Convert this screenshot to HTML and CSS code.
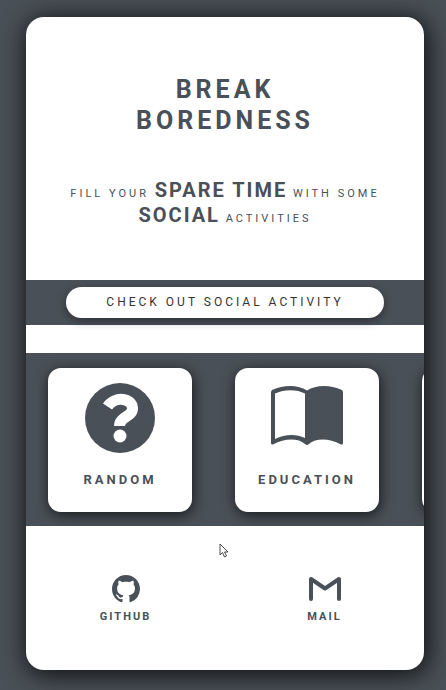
FILE: index.html
```html
<!DOCTYPE html>
<html lang="en">
<head>
<meta charset="utf-8">
<meta name="viewport" content="width=device-width, initial-scale=1">
<title>Break Boredness</title>
<link rel="stylesheet" href="styles.css">
</head>
<body>
<main class="panel">
  <header class="intro">
    <h1 class="title">Break<br>Boredness</h1>
    <p class="tagline">Fill your <strong>spare time</strong> with some <strong>social</strong> activities</p>
  </header>
  <div class="action-bar">
    <button class="action" type="button">Check out social activity</button>
  </div>
  <nav class="categories">
    <button class="category" type="button">
      <svg class="category-icon" viewBox="0 0 72 72" aria-hidden="true">
        <circle cx="36" cy="36" r="35" fill="currentColor"/>
        <path d="M23.500 24.500C31 13.500 48.500 16 48.500 26.500C48.500 35 35.500 34.500 35.500 44" fill="none" stroke="#fff" stroke-width="11"/>
        <circle cx="36" cy="54" r="6.500" fill="#fff"/>
      </svg>
      <span class="category-name">Random</span>
    </button>
    <button class="category" type="button">
      <svg class="category-icon" viewBox="0 0 72 72" aria-hidden="true">
        <path fill="currentColor" fill-rule="evenodd" d="M0 10.500Q0 9 1 8C13 2.500 27 2.500 36 8.500C45 2.500 59 2.500 71 8Q72 9 72 10.500V61Q72 63 70 62.500C58 56 45 56 38 62Q36 64 34 62C27 56 14 56 2 62.500Q0 63 0 61ZM4 11.500V57C14 52 25 51.500 34 56V11.500C26 7 13 7 4 11.500Z"/>
      </svg>
      <span class="category-name">Education</span>
    </button>
    <button class="category" type="button" aria-label="More"></button>
  </nav>
  <footer class="links">
    <a class="link" href="#github">
      <svg class="link-icon" viewBox="0 0 16 16" aria-hidden="true">
        <path fill="currentColor" d="M8 0C3.580 0 0 3.580 0 8c0 3.540 2.290 6.530 5.470 7.590.4.070.55-.17.55-.38 0-.19-.01-.82-.01-1.490-2.010.37-2.530-.49-2.690-.94-.09-.23-.48-.94-.82-1.130-.28-.15-.68-.52-.01-.53.63-.01 1.080.58 1.230.82.72 1.210 1.870.87 2.330.66.07-.52.28-.87.51-1.070-1.780-.2-3.640-.89-3.640-3.950 0-.87.31-1.590.82-2.150-.08-.2-.36-1.020.08-2.120 0 0 .67-.21 2.200.82.64-.18 1.320-.27 2-.27s1.360.09 2 .27c1.530-1.040 2.200-.82 2.200-.82.44 1.100.16 1.920.08 2.120.51.56.82 1.270.82 2.150 0 3.070-1.870 3.750-3.650 3.950.29.25.54.73.54 1.480 0 1.070-.01 1.930-.01 2.200 0 .21.15.46.55.38A8.010 8.010 0 0 0 16 8c0-4.420-3.580-8-8-8z"/>
      </svg>
      <span>Github</span>
    </a>
    <a class="link" href="#mail">
      <svg class="link-icon link-icon-mail" viewBox="0 0 32 28" aria-hidden="true">
        <path d="M2 24V4L16 13.500L30 4V24" fill="none" stroke="currentColor" stroke-width="4" stroke-linecap="round" stroke-linejoin="round"/>
      </svg>
      <span>Mail</span>
    </a>
  </footer>
  <svg class="cursor" viewBox="0 0 10 16" aria-hidden="true">
    <path d="M1 1V12L3.500 9.500L5.500 14L7.500 13L5.500 9H9Z" fill="#fff" stroke="#222" stroke-width="0.800"/>
  </svg>
</main>
</body>
</html>
```
FILE: styles.css
```css
* {
  box-sizing: border-box;
}

body {
  margin: 0;
  min-height: 100vh;
  padding: 17px 22px 20px 26px;
  display: flex;
  background: #495057;
  color: #495057;
  font-family: Roboto, sans-serif;
  text-transform: uppercase;
}

.panel {
  position: relative;
  flex: 1;
  min-width: 0;
  display: flex;
  flex-direction: column;
  overflow: hidden;
  border-radius: 18px;
  background: #fff;
  box-shadow: 2px 3px 25px 2px #101010;
}

.intro {
  padding: 57px 32px 49px;
  text-align: center;
}

.title {
  margin: 0 0 45px;
  font-size: 25px;
  line-height: 31px;
  letter-spacing: 4px;
}

.tagline {
  margin: 0;
  font-size: 11px;
  line-height: 25px;
  letter-spacing: 3px;
}

.tagline strong {
  font-size: 20px;
  line-height: 0;
  letter-spacing: 2px;
}

.action-bar {
  padding: 7px 40px;
  display: flex;
  background: #495057;
}

.action {
  flex: 1;
  height: 31px;
  padding: 0 0 2px;
  border: 0;
  border-radius: 16px;
  background: #fff;
  box-shadow: 0 3px 10px rgba(0, 0, 0, 0.4);
  color: #333;
  font: 12px Roboto, sans-serif;
  letter-spacing: 3px;
  text-transform: inherit;
}

.categories {
  margin-top: 28px;
  padding: 15px 22px 14px;
  display: flex;
  gap: 43px;
  overflow: hidden;
  background: #495057;
}

.category {
  flex: 0 0 144px;
  height: 144px;
  padding: 14px 0 0;
  display: flex;
  flex-direction: column;
  align-items: center;
  border: 0;
  border-radius: 13px;
  background: #fff;
  box-shadow: 1px 3px 14px rgba(0, 0, 0, 0.7);
  color: inherit;
  font: bold 13px/18px Roboto, sans-serif;
  letter-spacing: 3px;
  text-transform: inherit;
}

.category-icon {
  width: 72px;
  height: 72px;
}

.category-name {
  margin-top: 17px;
}

.links {
  padding: 49px 0 45px;
  display: grid;
  grid-template-columns: 1fr 1fr;
}

.link {
  display: flex;
  flex-direction: column;
  align-items: center;
  gap: 6px;
  color: inherit;
  font-size: 11px;
  font-weight: bold;
  line-height: 16px;
  letter-spacing: 2px;
  text-decoration: none;
}

.link-icon {
  width: 28px;
  height: 28px;
}

.link-icon-mail {
  width: 32px;
}

.cursor {
  position: absolute;
  top: 526px;
  left: 193px;
  width: 10px;
  height: 16px;
}
```
